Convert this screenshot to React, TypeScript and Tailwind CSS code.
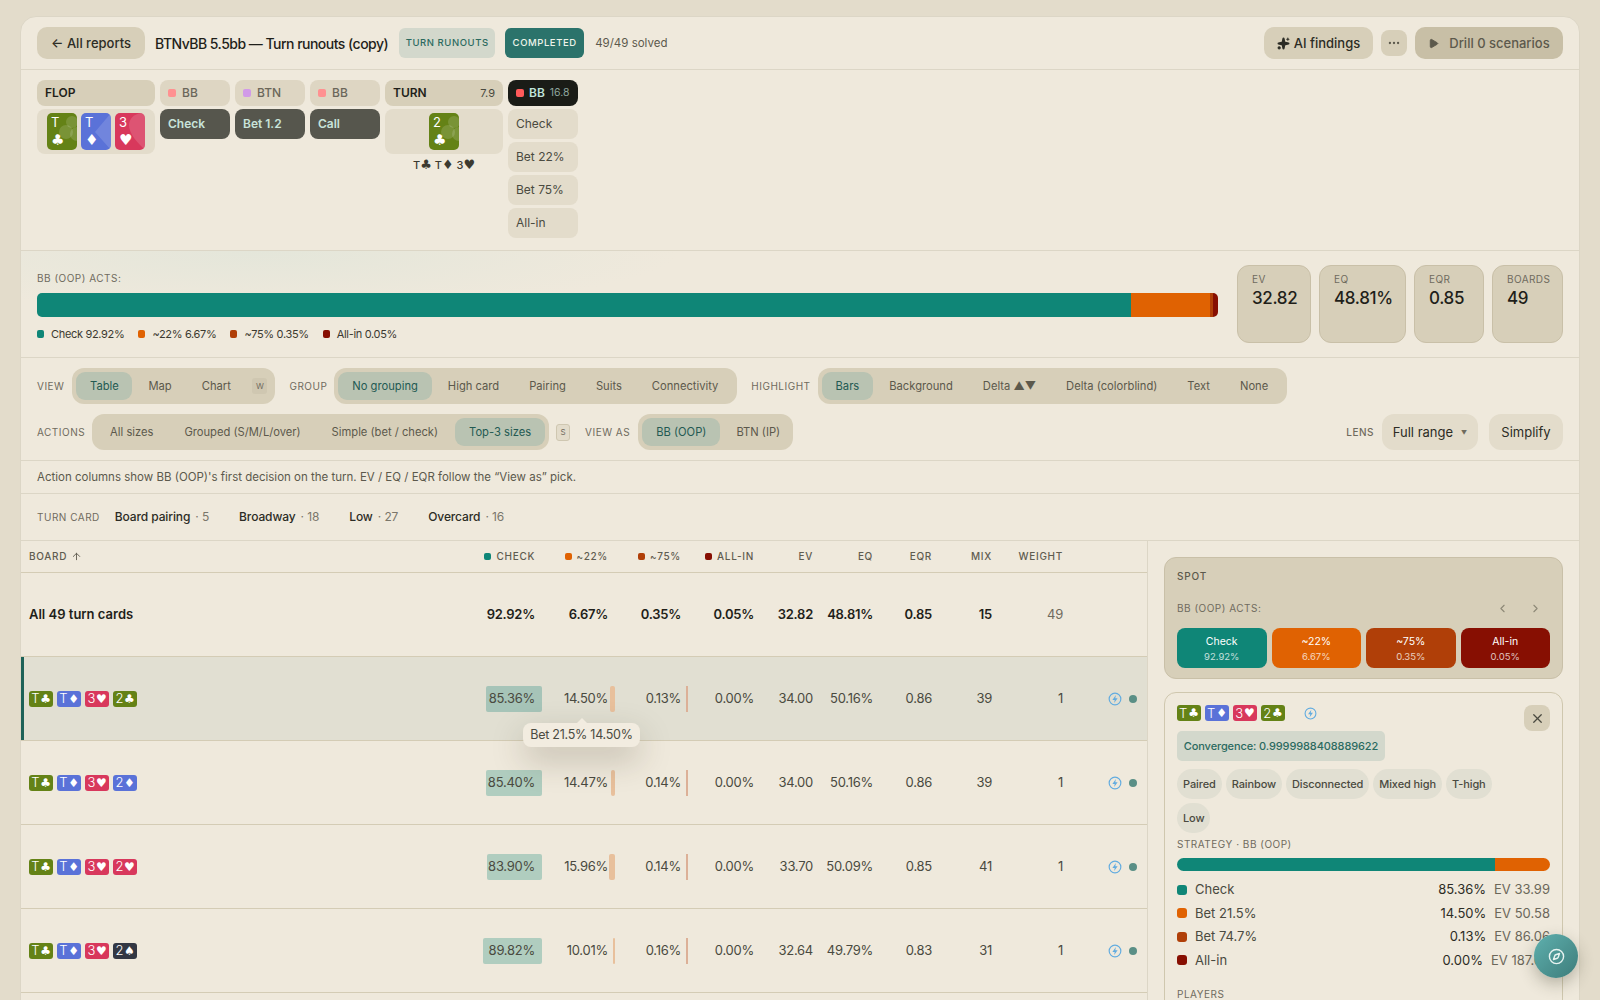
import React from "react";
import { ArrowUp, ChevronLeft, ChevronRight, Compass, Ellipsis, Play, Sparkles, X } from "lucide-react";

type Suit = "c" | "d" | "h" | "s";

const suitGlyph: Record<Suit, string> = { c: "♣", d: "♦", h: "♥", s: "♠" };
const suitBg: Record<Suit, string> = {
  c: "bg-[#648216]",
  d: "bg-[#5a72d8]",
  h: "bg-[#d8385c]",
  s: "bg-[#333844]",
};

const gridCols =
  "grid grid-cols-[448px_73px_73px_73px_73px_60px_60px_59px_60px_71px_1fr] items-center";

const rows = [
  { turn: "c", check: "85.36%", checkW: 56, b22: "14.50%", b22W: 5, b75: "0.13%", evv: "34.00", eq: "50.16%", eqr: "0.86", mix: "39" },
  { turn: "d", check: "85.40%", checkW: 56, b22: "14.47%", b22W: 4, b75: "0.14%", evv: "34.00", eq: "50.16%", eqr: "0.86", mix: "39" },
  { turn: "h", check: "83.90%", checkW: 55, b22: "15.96%", b22W: 6, b75: "0.14%", evv: "33.70", eq: "50.09%", eqr: "0.85", mix: "41" },
  { turn: "s", check: "89.82%", checkW: 59, b22: "10.01%", b22W: 2, b75: "0.16%", evv: "32.64", eq: "49.79%", eqr: "0.83", mix: "31" },
] as const;

const Chip = ({ rank, suit }: { rank: string; suit: Suit }) => (
  <span className={`flex h-4 w-6 items-center justify-center gap-px rounded-[3px] text-[13px] leading-none text-white ${suitBg[suit]}`}>
    <span className="font-light">{rank}</span>
    <span className="font-['DejaVu_Sans',sans-serif] text-[12px]">{suitGlyph[suit]}</span>
  </span>
);

// faint oversized suit shape behind the rank
const Watermark = ({ suit }: { suit: Suit }) => (
  <svg className="absolute inset-0" width="30" height="37" viewBox="0 0 30 37" fill="#ffffff" fillOpacity="0.14">
    {suit === "c" && (
      <g>
        <circle cx="25" cy="9" r="6" />
        <circle cx="19" cy="19" r="7" />
        <circle cx="30" cy="21" r="7" />
      </g>
    )}
    {suit === "d" && <polygon points="30,0 14,19 30,37" />}
    {suit === "h" && <path d="M30 37 L30 0 C21 -1 14 5 14 12 C14 21 22 29 30 37Z" />}
  </svg>
);

const BigCard = ({ rank, suit }: { rank: string; suit: Suit }) => (
  <div className={`relative flex h-[37px] w-[30px] flex-col justify-between overflow-hidden rounded-[5px] px-1 py-0.5 text-white ${suitBg[suit]}`}>
    <Watermark suit={suit} />
    <span className="relative text-[13px] leading-[15px]">{rank}</span>
    <span className="relative font-['DejaVu_Sans',sans-serif] text-[15px] leading-[15px]">{suitGlyph[suit]}</span>
  </div>
);

const BoltCircle = ({ size = 14 }: { size?: number }) => (
  <svg width={size} height={size} viewBox="0 0 24 24" fill="none" stroke="#62ace0" strokeWidth="2">
    <circle cx="12" cy="12" r="10" />
    <path d="M13.5 5 7.5 13.5h4L10.5 19 16.5 10.5h-4z" fill="#62ace0" stroke="none" />
  </svg>
);

const GroupLabel = ({ children, className = "" }: { children: React.ReactNode; className?: string }) => (
  <span className={`text-[10px] uppercase tracking-[0.05em] text-[#6f6b5e] ${className}`}>{children}</span>
);

const Segmented = ({ items, active, className = "" }: { items: string[]; active: string; className?: string }) => (
  <div className={`flex h-9 items-center gap-0.5 rounded-xl bg-[#d7cfb9] p-1 ${className}`}>
    {items.map((item) => (
      <button
        key={item}
        className={`h-7 whitespace-nowrap rounded-[9px] px-3.5 pt-px text-[11.2px] ${
          item === active ? "bg-[#b9c3b2] text-[#235a52]" : "text-[#5c594c]"
        }`}
      >
        {item}
      </button>
    ))}
  </div>
);

const Node = ({ label, dot, action }: { label: string; dot: string; action: string }) => (
  <div className="flex w-[70px] flex-col gap-[3px]">
    <div className="flex h-[26px] items-center gap-1.5 rounded-lg bg-[#ded6c3] px-2 text-[12px] font-medium text-[#6b675a]">
      <span className={`h-2 w-2 shrink-0 rounded-[2px] ${dot}`} />
      {label}
    </div>
    <div className="flex h-[30px] items-center rounded-lg bg-[#56564d] px-2 text-[12px] font-semibold text-[#c8e3da]">{action}</div>
  </div>
);

const Legend = ({ color, label }: { color: string; label: string }) => (
  <span className="flex items-center gap-[7px]">
    <span className={`h-2 w-[7px] rounded-[2px] ${color}`} />
    {label}
  </span>
);

const Stat = ({ label, value, width }: { label: string; value: string; width: string }) => (
  <div className={`h-[78px] rounded-xl border border-[#c9c0a8] bg-[#d7cfb9] px-3.5 pt-[7px] ${width}`}>
    <div className="text-[10px] leading-[12px] tracking-[0.04em] text-[#6f6b5e]">{label}</div>
    <div className="mt-px text-[17px] font-medium leading-[24px] tracking-[-0.02em] text-[#1f1f1a]">{value}</div>
  </div>
);

const HeadCell = ({ dot, tight, children }: { dot?: string; tight?: boolean; children: React.ReactNode }) => (
  <div className={`flex items-center justify-end gap-[5px] text-[10px] font-medium uppercase tracking-[0.07em] text-[#5f5c50] ${tight ? "pr-[7px]" : "pr-2"}`}>
    {dot && <span className={`h-[7px] w-[7px] rounded-[2px] ${dot}`} />}
    {children}
  </div>
);

const Strat = ({ color, label, pct, ev }: { color: string; label: string; pct: string; ev: string }) => (
  <div className="flex h-[23.5px] items-center text-[13px] text-[#4a4a40]">
    <span className={`mr-2 h-2.5 w-2.5 rounded-[3px] ${color}`} />
    <span className="flex-1">{label}</span>
    <span className="text-[#2c2c25]">{pct}</span>
    <span className="ml-2 text-[#6b675a]">{ev}</span>
  </div>
);

export default function App() {
  return (
    <div className="relative h-screen overflow-hidden bg-[#e3dccb] px-5 pt-4 font-['Inter',sans-serif] text-[#1f1f1a]">
      <div className="h-[1200px] w-[1560px] rounded-t-2xl border border-[#dcd6c6] bg-[#efe9dc]">
        {/* header */}
        <header className="flex h-[53px] items-center border-b border-[#dcd6c6] pl-4 pr-4">
          <button className="h-8 w-[108px] rounded-[10px] bg-[#d7cfb9] pt-px text-[13px] font-medium text-[#2c2c25]">← All reports</button>
          <h1 className="ml-2.5 text-[14px] font-medium tracking-[-0.037em]">BTNvBB 5.5bb — Turn runouts (copy)</h1>
          <span className="ml-[11px] flex h-[30px] w-[96px] items-center justify-center rounded-md bg-[#d3d8cc] text-[9.5px] font-medium uppercase tracking-[0.06em] text-[#2b6a60]">
            Turn runouts
          </span>
          <span className="ml-2.5 flex h-[30px] w-[79px] items-center justify-center rounded-md bg-[#2b736b] text-[9.5px] font-medium uppercase tracking-[0.06em] text-[#eef3ea]">
            Completed
          </span>
          <span className="ml-[11px] pt-px text-[11.5px] text-[#5c594c]">49/49 solved</span>
          <div className="ml-auto flex items-center gap-2">
            <button className="flex h-8 w-[109px] items-center justify-center gap-1 rounded-[10px] bg-[#d7cfb9] pt-px text-[13px] font-medium text-[#2c2c25]">
              <Sparkles size={13} fill="currentColor" /> AI findings
            </button>
            <button className="flex h-[26px] w-[26px] items-center justify-center rounded-lg bg-[#d7cfb9] text-[#5c594c]">
              <Ellipsis size={14} />
            </button>
            <button className="flex h-8 w-[148px] items-center justify-center gap-2.5 rounded-[10px] bg-[#c8bfa6] pt-px text-[13px] font-medium text-[#5c594c]">
              <Play size={11} fill="currentColor" /> Drill 0 scenarios
            </button>
          </div>
        </header>

        {/* action tree */}
        <section className="flex h-[181px] items-start gap-[5px] border-b border-[#dcd6c6] px-4 pt-2.5">
          <div className="flex w-[118px] flex-col gap-[3px]">
            <div className="flex h-[26px] items-center rounded-lg bg-[#d7cfb9] px-2 text-[12px] font-semibold">FLOP</div>
            <div className="flex h-[45px] items-center justify-center gap-1 rounded-lg bg-[#e3dccb]">
              <BigCard rank="T" suit="c" />
              <BigCard rank="T" suit="d" />
              <BigCard rank="3" suit="h" />
            </div>
          </div>
          <Node label="BB" dot="bg-[#ff9191]" action="Check" />
          <Node label="BTN" dot="bg-[#d19ae8]" action="Bet 1.2" />
          <Node label="BB" dot="bg-[#ff9191]" action="Call" />
          <div className="flex w-[118px] flex-col gap-[3px]">
            <div className="flex h-[26px] items-center justify-between rounded-lg bg-[#d7cfb9] px-2 text-[12px] font-semibold">
              TURN <span className="text-[11px] font-normal text-[#4a4a40]">7.9</span>
            </div>
            <div className="flex h-[45px] items-center justify-center rounded-lg bg-[#e3dccb]">
              <BigCard rank="2" suit="c" />
            </div>
            <div className="text-center text-[11px] font-medium leading-4 text-[#3c3a30]">
              T<span className="font-['DejaVu_Sans',sans-serif] text-[13px]">♣</span> T<span className="font-['DejaVu_Sans',sans-serif] text-[13px]">♦</span> 3<span className="font-['DejaVu_Sans',sans-serif] text-[13px]">♥</span>
            </div>
          </div>
          <div className="flex w-[70px] flex-col gap-[3px]">
            <div className="flex h-[26px] items-center gap-[5px] rounded-lg bg-[#1a1c17] px-2 text-[12px] font-semibold text-[#bfe3da]">
              <span className="h-2 w-2 shrink-0 rounded-[2px] bg-[#ff5a5a]" />
              BB <span className="text-[10.5px] font-normal text-[#8fa69e]">16.8</span>
            </div>
            {["Check", "Bet 22%", "Bet 75%", "All-in"].map((opt) => (
              <div key={opt} className="flex h-[30px] items-center rounded-lg bg-[#e3dccb] px-2 text-[12px] text-[#4a4a40]">
                {opt}
              </div>
            ))}
          </div>
        </section>

        {/* summary */}
        <section className="flex h-[107px] gap-[19px] border-b border-[#dcd6c6] bg-[radial-gradient(ellipse_420px_60px_at_240px_0px,#e4e6da,transparent)] px-4 pt-3.5">
          <div className="flex-1">
            <GroupLabel className="mt-[5px] block leading-4">BB (OOP) acts:</GroupLabel>
            <div className="mt-[7px] flex h-6 overflow-hidden rounded-[5px]">
              <div className="w-[1094px] bg-[#0f8677]" />
              <div className="w-[79px] bg-[#e06202]" />
              <div className="w-[3px] bg-[#b03f08]" />
              <div className="flex-1 bg-[#870f02]" />
            </div>
            <div className="mt-[9px] flex gap-[14px] text-[11px] leading-4 tracking-[-0.03em] text-[#3c3a30]">
              <Legend color="bg-[#0f8677]" label="Check 92.92%" />
              <Legend color="bg-[#e06202]" label="~22% 6.67%" />
              <Legend color="bg-[#b03f08]" label="~75% 0.35%" />
              <Legend color="bg-[#870f02]" label="All-in 0.05%" />
            </div>
          </div>
          <div className="flex gap-2">
            <Stat label="EV" value="32.82" width="w-[74px]" />
            <Stat label="EQ" value="48.81%" width="w-[87px]" />
            <Stat label="EQR" value="0.85" width="w-[70px]" />
            <Stat label="BOARDS" value="49" width="w-[71px]" />
          </div>
        </section>

        {/* view controls */}
        <section className="flex h-[103px] flex-col gap-2.5 border-b border-[#dcd6c6] px-4 pt-2.5">
          <div className="flex items-center">
            <GroupLabel className="mr-2">View</GroupLabel>
            <div className="flex h-9 w-[203px] items-center rounded-xl bg-[#d7cfb9] p-1">
              <button className="h-7 w-14 rounded-[9px] bg-[#b9c3b2] pt-px text-[11.2px] text-[#235a52]">Table</button>
              <button className="ml-4 pt-px text-[11.2px] text-[#5c594c]">Map</button>
              <button className="ml-[30px] pt-px text-[11.2px] text-[#5c594c]">Chart</button>
              <span className="ml-auto mr-1 flex h-4 w-[15px] items-center justify-center rounded-[3px] bg-[#cfc7b1] text-[8px] text-[#6f6b5e]">W</span>
            </div>
            <GroupLabel className="ml-[14px] mr-[7px]">Group</GroupLabel>
            <Segmented items={["No grouping", "High card", "Pairing", "Suits", "Connectivity"]} active="No grouping" className="w-[403px]" />
            <GroupLabel className="ml-[14px] mr-[7px]">Highlight</GroupLabel>
            <Segmented items={["Bars", "Background", "Delta ▲▼", "Delta (colorblind)", "Text", "None"]} active="Bars" className="w-[469px]" />
          </div>
          <div className="flex items-center">
            <GroupLabel className="mr-[7px]">Actions</GroupLabel>
            <Segmented items={["All sizes", "Grouped (S/M/L/over)", "Simple (bet / check)", "Top-3 sizes"]} active="Top-3 sizes" className="w-[457px] justify-between" />
            <span className="ml-[7px] flex h-[17px] w-[14px] items-center justify-center rounded-[3px] border border-[#cfc7b1] bg-[#e3dccb] text-[8px] text-[#6f6b5e]">S</span>
            <GroupLabel className="ml-[15px] mr-2">View as</GroupLabel>
            <Segmented items={["BB (OOP)", "BTN (IP)"]} active="BB (OOP)" className="w-[155px]" />
            <GroupLabel className="ml-auto mr-2 font-medium">Lens</GroupLabel>
            <button className="flex h-9 w-[96px] items-center justify-center gap-2 rounded-xl bg-[#e3dccb] pt-px text-[13px] text-[#2c2c25]">
              Full range <span className="text-[6px] text-[#6f6b5e]">▼</span>
            </button>
            <button className="ml-[11px] h-9 w-[74px] rounded-xl bg-[#e3dccb] pt-px text-[13px] text-[#2c2c25]">Simplify</button>
          </div>
        </section>

        <div className="flex h-[33px] items-center border-b border-[#dcd6c6] px-4 pt-px text-[11.5px] text-[#5c594c]">
          Action columns show BB (OOP)'s first decision on the turn. EV / EQ / EQR follow the “View as” pick.
        </div>

        <div className="flex h-[47px] items-center border-b border-[#dcd6c6] px-4 text-[12px]">
          <GroupLabel className="mr-[15px] text-[9.5px]">Turn card</GroupLabel>
          {[
            ["Board pairing", "5"],
            ["Broadway", "18"],
            ["Low", "27"],
            ["Overcard", "16"],
          ].map(([name, count]) => (
            <span key={name} className="mr-[30px] font-medium tracking-[-0.01em] text-[#2c2c25]">
              {name} <span className="ml-0.5 font-normal text-[#7a766a]">· {count}</span>
            </span>
          ))}
        </div>

        <div className="flex">
          {/* table */}
          <div className="w-[1127px] shrink-0 border-r border-[#dcd6c6]">
            <div className={`${gridCols} h-8 border-b border-[#d4ccb5]`}>
              <div className="flex items-center gap-1 pl-2 text-[10px] font-medium tracking-[0.07em] text-[#5f5c50]">
                BOARD <ArrowUp size={11} />
              </div>
              <HeadCell tight dot="bg-[#0f8677]">Check</HeadCell>
              <HeadCell tight dot="bg-[#e06202]">~22%</HeadCell>
              <HeadCell tight dot="bg-[#b03f08]">~75%</HeadCell>
              <HeadCell tight dot="bg-[#870f02]">All-in</HeadCell>
              <HeadCell>EV</HeadCell>
              <HeadCell>EQ</HeadCell>
              <HeadCell>EQR</HeadCell>
              <HeadCell>Mix</HeadCell>
              <HeadCell>Weight</HeadCell>
            </div>

            <div className={`${gridCols} h-[84px] border-b border-[#d4ccb5] text-right text-[13px] font-semibold tracking-[-0.02em]`}>
              <div className="pl-2 text-left tracking-normal">All 49 turn cards</div>
              <div className="pr-[7px]">92.92%</div>
              <div className="pr-[7px]">6.67%</div>
              <div className="pr-[7px]">0.35%</div>
              <div className="pr-[7px]">0.05%</div>
              <div className="pr-2">32.82</div>
              <div className="pr-2">48.81%</div>
              <div className="pr-2">0.85</div>
              <div className="pr-2">15</div>
              <div className="pr-2 font-normal text-[#6f6b5e]">49</div>
            </div>

            {rows.map((row, i) => (
              <div
                key={row.turn}
                className={`${gridCols} relative h-[84px] border-b border-[#d4ccb5] text-right text-[13px] tracking-[-0.02em] text-[#4a4a40] ${
                  i === 0 ? "bg-[#e1dfd2] shadow-[inset_3px_0_0_#1d6258]" : ""
                }`}
              >
                <div className="flex gap-1 pl-2">
                  <Chip rank="T" suit="c" />
                  <Chip rank="T" suit="d" />
                  <Chip rank="3" suit="h" />
                  <Chip rank="2" suit={row.turn} />
                </div>
                <div className="relative flex h-[26px] items-center justify-end pr-[7px]">
                  <span
                    className={`absolute right-0 top-0 h-full rounded-[2px] ${i === 0 ? "bg-[#a6c4b8]" : "bg-[#b0cdbf]"}`}
                    style={{ width: row.checkW }}
                  />
                  <span className="relative">{row.check}</span>
                </div>
                <div className="relative flex h-[26px] items-center justify-end pr-[7px]">
                  <span className="absolute right-0 top-0 h-full rounded-[2px] bg-[#e8c09c]" style={{ width: row.b22W }} />
                  {row.b22}
                </div>
                <div className="relative flex h-[26px] items-center justify-end pr-[7px]">
                  <span className="absolute right-0 top-0 h-full w-0.5 bg-[#dcb097]" />
                  {row.b75}
                </div>
                <div className="pr-[7px]">0.00%</div>
                <div className="pr-2">{row.evv}</div>
                <div className="pr-2">{row.eq}</div>
                <div className="pr-2">{row.eqr}</div>
                <div className="pr-2">{row.mix}</div>
                <div className="pr-2">1</div>
                <div className="flex items-center gap-[7px] pl-[37px]">
                  <BoltCircle size={14} />
                  <span className="h-2 w-2 rounded-full bg-[#5a8f86]" />
                </div>
                {i === 0 && (
                  <div className="absolute left-[502px] top-[66px] z-10 flex h-6 w-[117px] items-center justify-center rounded-lg bg-[#f2ece0] text-[12.5px] text-[#4a4a40] shadow-[0_12px_32px_rgba(60,50,30,0.25)]">
                    <span className="absolute -top-[5px] left-1/2 h-0 w-0 -translate-x-1/2 border-x-[5px] border-b-[5px] border-x-transparent border-b-[#f2ece0]" />
                    Bet 21.5% 14.50%
                  </div>
                )}
              </div>
            ))}
          </div>

          {/* side panel */}
          <aside className="flex-1 px-4 pt-4">
            <div className="h-[122px] rounded-xl border border-[#c9c0a8] bg-[#d7cfb9] px-3 pt-2.5">
              <div className="text-[10px] font-medium leading-4 tracking-[0.08em] text-[#5c594c]">SPOT</div>
              <div className="mt-[16px] flex items-center justify-between leading-4">
                <GroupLabel>BB (OOP) acts:</GroupLabel>
                <span className="mr-2 flex gap-5 text-[#8d8877]">
                  <ChevronLeft size={13} />
                  <ChevronRight size={13} />
                </span>
              </div>
              <div className="mt-[12px] grid grid-cols-4 gap-[5px] text-center text-white">
                {[
                  ["Check", "92.92%", "bg-[#0f8677]"],
                  ["~22%", "6.67%", "bg-[#e06202]"],
                  ["~75%", "0.35%", "bg-[#b03f08]"],
                  ["All-in", "0.05%", "bg-[#870f02]"],
                ].map(([name, pct, bg]) => (
                  <div key={name} className={`h-10 rounded-lg pt-1.5 ${bg}`}>
                    <div className="text-[10.5px] font-normal leading-[16px]">{name}</div>
                    <div className="text-[9.5px] leading-[14px] text-white/75">{pct}</div>
                  </div>
                ))}
              </div>
            </div>

            <div className="mt-[13px] h-[400px] rounded-xl border border-[#cfc7ae] px-3 pt-3">
              <div className="flex items-start justify-between">
                <div className="flex items-center gap-1">
                  <Chip rank="T" suit="c" />
                  <Chip rank="T" suit="d" />
                  <Chip rank="3" suit="h" />
                  <Chip rank="2" suit="c" />
                  <span className="ml-[15px]">
                    <BoltCircle size={13} />
                  </span>
                </div>
                <button className="flex h-[26px] w-[26px] items-center justify-center rounded-lg bg-[#d7cfb9] text-[#4a4a40]">
                  <X size={15} />
                </button>
              </div>
              <div className="flex h-[30px] w-[208px] items-center justify-center rounded-[5px] bg-[#d3d8cc] text-[11px] font-medium tracking-[-0.01em] text-[#2b6a60]">
                Convergence: 0.9999988408889622
              </div>
              <div className="mt-2 flex max-w-[330px] flex-wrap gap-1">
                {["Paired", "Rainbow", "Disconnected", "Mixed high", "T-high", "Low"].map((tag) => (
                  <span key={tag} className="flex h-[30px] items-center rounded-full bg-[#e1dfd2] px-1.5 text-[11px] font-medium tracking-[-0.01em] text-[#4a4a40]">
                    {tag}
                  </span>
                ))}
              </div>
              <GroupLabel className="mt-[3px] block leading-4">Strategy · BB (OOP)</GroupLabel>
              <div className="mt-[6px] flex h-[13px] overflow-hidden rounded-full">
                <div className="w-[318px] bg-[#0f8677]" />
                <div className="flex-1 bg-[#e06202]" />
              </div>
              <div className="mt-[7px]">
                <Strat color="bg-[#0f8677]" label="Check" pct="85.36%" ev="EV 33.99" />
                <Strat color="bg-[#e06202]" label="Bet 21.5%" pct="14.50%" ev="EV 50.58" />
                <Strat color="bg-[#b03f08]" label="Bet 74.7%" pct="0.13%" ev="EV 86.06" />
                <Strat color="bg-[#870f02]" label="All-in" pct="0.00%" ev="EV 187.02" />
              </div>
              <GroupLabel className="mt-[14px] block leading-4">Players</GroupLabel>
            </div>
          </aside>
        </div>
      </div>

      <button className="absolute left-[1534px] top-[934px] flex h-11 w-11 items-center justify-center rounded-full bg-gradient-to-br from-[#5fb0ae] to-[#3d7d7b] text-[#e6f3f0] shadow-[0_6px_16px_rgba(50,50,30,0.3)]">
        <Compass size={17} />
      </button>
    </div>
  );
}
